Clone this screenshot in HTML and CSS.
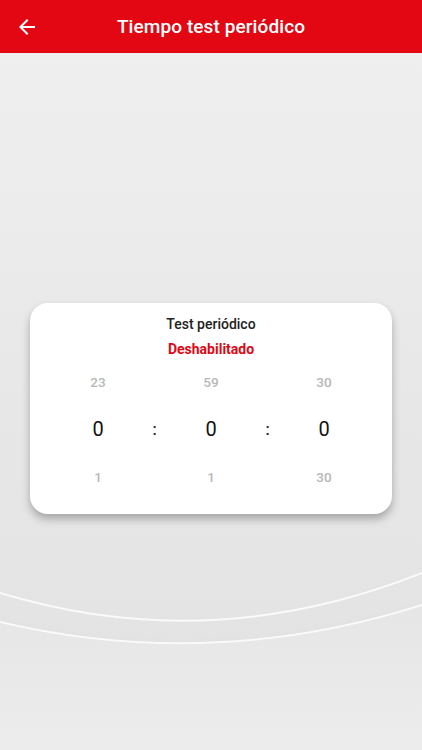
FILE: index.html
```html
<!DOCTYPE html>
<html lang="es">
<head>
<meta charset="utf-8">
<link rel="stylesheet" href="styles.css">
</head>
<body>
<div class="app">
  <header class="topbar">
    <button class="back" aria-label="Atrás">
      <svg width="24" height="24" viewBox="0 0 24 24"><path d="M20 11H7.83l5.59-5.59L12 4l-8 8 8 8 1.41-1.41L7.83 13H20v-2z" fill="#fff"/></svg>
    </button>
    <h1 class="title">Tiempo test periódico</h1>
  </header>
  <main class="content">
    <svg class="bg" width="422" height="697" viewBox="0 53 422 697" preserveAspectRatio="none">
      <defs>
        <linearGradient id="low" x1="0" y1="0" x2="0" y2="1">
          <stop offset="0" stop-color="#e6e6e7"/>
          <stop offset="1" stop-color="#ececec"/>
        </linearGradient>
        <filter id="sh" x="-10%" y="-10%" width="120%" height="130%">
          <feGaussianBlur stdDeviation="4"/>
        </filter>
      </defs>
      <path d="M0 625 Q211 675 422 608 L422 750 L0 750 Z" fill="#cfcfd1" filter="url(#sh)" opacity="0.6"/>
      <path d="M0 623 Q211 673 422 606 L422 750 L0 750 Z" fill="url(#low)"/>
      <path d="M0 593 Q211 657 422 573" fill="none" stroke="#fafafa" stroke-width="2"/>
      <path d="M0 622 Q211 672 422 605" fill="none" stroke="#fafafa" stroke-width="2"/>
    </svg>
    <section class="card">
      <div class="card-title">Test periódico</div>
      <div class="status">Deshabilitado</div>
      <div class="picker">
        <span class="dim">23</span><span></span><span class="dim">59</span><span></span><span class="dim">30</span>
        <span class="sel">0</span><span class="sep">:</span><span class="sel">0</span><span class="sep">:</span><span class="sel">0</span>
        <span class="dim">1</span><span></span><span class="dim">1</span><span></span><span class="dim">30</span>
      </div>
    </section>
  </main>
</div>
</body>
</html>
```
FILE: styles.css
```css
* { box-sizing: border-box; }
html, body { margin: 0; padding: 0; }
body {
  width: 422px;
  height: 750px;
  overflow: hidden;
  font-family: Roboto, "Liberation Sans", sans-serif;
}
.app {
  display: flex;
  flex-direction: column;
  height: 750px;
}
.topbar {
  height: 53px;
  background: #e30613;
  display: flex;
  align-items: center;
  position: relative;
  z-index: 2;
}
.back {
  background: none;
  border: 0;
  padding: 0;
  margin-left: 15px;
  width: 24px;
  height: 24px;
  display: flex;
}
.title {
  flex: 1;
  margin: 0 39px 0 0;
  text-align: center;
  color: #fff;
  font-size: 19px;
  font-weight: 500;
  letter-spacing: 0.1px;
}
.content {
  flex: 1;
  position: relative;
  background: linear-gradient(#efefef 0%, #e6e6e6 60%, #e2e2e3 100%);
  display: flex;
  justify-content: center;
  padding-top: 250px;
}
.bg {
  position: absolute;
  left: 0;
  top: 0;
}
.card {
  position: relative;
  width: 362px;
  height: 211px;
  background: #fff;
  border-radius: 18px;
  box-shadow: 0 5px 8px rgba(0, 0, 0, 0.28);
  padding-top: 13px;
  display: flex;
  flex-direction: column;
  align-items: center;
}
.card-title {
  font-size: 14px;
  font-weight: 500;
  color: #222;
  line-height: 17px;
}
.status {
  margin-top: 8px;
  font-size: 14px;
  font-weight: 700;
  color: #e30613;
  line-height: 17px;
}
.picker {
  margin-top: 0;
  display: grid;
  grid-template-columns: repeat(5, 56.5px);
  grid-auto-rows: 47.5px;
  justify-content: center;
  align-items: center;
  justify-items: center;
}
.dim {
  font-size: 13.5px;
  font-weight: 500;
  color: #b8b8b8;
}
.sel {
  font-size: 20px;
  color: #111;
}
.sep {
  font-size: 16px;
  font-weight: 500;
  color: #222;
}
```
